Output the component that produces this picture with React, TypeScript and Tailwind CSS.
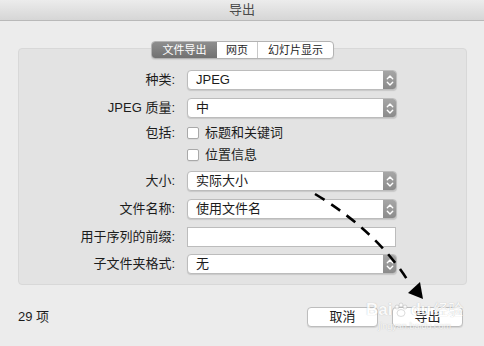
import React from "react";

const font = "font-['Liberation_Sans','Noto_Sans_CJK_SC',sans-serif]";

function Popup({ value }: { value: string }) {
  return (
    <div className="flex h-[20px] w-[210px] overflow-hidden rounded-[4px] border border-[#bcbcbc] bg-white shadow-[0_1px_1px_rgba(0,0,0,0.12)]">
      <div className="flex-1 pl-[8px] text-[13px] leading-[18px] text-[#1c1c1c]">{value}</div>
      <div className="flex w-[13px] items-center justify-center bg-linear-to-b from-[#a6a6a6] to-[#8b8b8b]">
        <svg width="8" height="13" viewBox="0 0 8 13" fill="none" stroke="white" strokeWidth="1.4" strokeLinecap="round" strokeLinejoin="round">
          <path d="M1.3 4.8 4 2.1l2.7 2.7M1.3 8.2 4 10.9l2.7-2.7" />
        </svg>
      </div>
    </div>
  );
}

function Label({ text }: { text: string }) {
  return <div className="text-right text-[13px] leading-[20px] text-[#1c1c1c]">{text}</div>;
}

function Check({ text }: { text: string }) {
  return (
    <div className="flex h-[20px] items-center gap-[6px] text-[13px] text-[#1c1c1c]">
      <span className="h-[12px] w-[12px] rounded-[2px] border border-[#a9a9a9] bg-white shadow-[0_1px_0_rgba(0,0,0,0.05)]" />
      <span className="leading-[20px]">{text}</span>
    </div>
  );
}

export default function App() {
  return (
    <div className={`relative h-[346px] w-[484px] overflow-hidden bg-[#ececec] ${font}`}>
      {/* title bar */}
      <div className="flex h-[21px] items-center justify-center border-b border-[#b9b9b9] bg-linear-to-b from-[#ececec] to-[#d6d6d6] text-[13px] text-[#4a4a4a]">
        导出
      </div>

      {/* tabs */}
      <div className="relative z-10 mt-[20px] flex justify-center">
        <div className="ml-[1px] flex h-[18px] overflow-hidden rounded-[4px] border border-[#b3b3b3] bg-white text-[11px] leading-[16px] shadow-[0_1px_1px_rgba(0,0,0,0.08)]">
          <div className="w-[65px] bg-linear-to-b from-[#8e8e8e] to-[#717171] text-center text-white">文件导出</div>
          <div className="w-[41px] border-r border-[#c8c8c8] text-center text-[#1c1c1c]">网页</div>
          <div className="w-[75px] text-center text-[#1c1c1c]">幻灯片显示</div>
        </div>
      </div>

      {/* panel */}
      <div className="-mt-[11px] ml-[18px] w-[449px] rounded-[4px] border border-[#d8d8d8] bg-[#e3e3e3] pt-[21px] pb-[10px]">
        <div className="grid grid-cols-[156px_210px] gap-x-[12px]">
          <Label text="种类:" />
          <Popup value="JPEG" />

          <div className="col-span-2 h-[8px]" />
          <Label text="JPEG 质量:" />
          <Popup value="中" />

          <div className="col-span-2 h-[5px]" />
          <Label text="包括:" />
          <Check text="标题和关键词" />

          <div className="col-span-2 h-[2px]" />
          <div />
          <Check text="位置信息" />

          <div className="col-span-2 h-[6px]" />
          <Label text="大小:" />
          <Popup value="实际大小" />

          <div className="col-span-2 h-[8px]" />
          <Label text="文件名称:" />
          <Popup value="使用文件名" />

          <div className="col-span-2 h-[8px]" />
          <Label text="用于序列的前缀:" />
          <div className="h-[20px] w-[209px] border border-[#bcbcbc] bg-white" />

          <div className="col-span-2 h-[7px]" />
          <Label text="子文件夹格式:" />
          <Popup value="无" />
        </div>
      </div>

      {/* footer */}
      <div className="mt-[22px] flex items-center pl-[18px] pr-[21px]">
        <div className="flex-1 text-[13px] text-[#1c1c1c]">29 项</div>
        <div className="flex gap-[14px]">
          <button className="h-[20px] w-[71px] rounded-[4px] border border-[#bdbdbd] bg-white text-[13px] leading-[18px] text-[#1c1c1c] shadow-[0_1px_1px_rgba(0,0,0,0.1)]">
            取消
          </button>
          <button className="h-[20px] w-[71px] rounded-[4px] border border-[#bdbdbd] bg-white text-[13px] leading-[18px] text-[#1c1c1c] shadow-[0_1px_1px_rgba(0,0,0,0.1)]">
            导出
          </button>
        </div>
      </div>

      {/* watermark */}
      <div className="pointer-events-none absolute left-[366px] top-[300px] flex flex-col items-center text-white opacity-75 [text-shadow:0_0_1px_#a0a0a0]">
        <div className="flex items-center text-[17px] font-bold leading-[20px]">
          <span>Bai</span>
          <svg width="16" height="16" viewBox="0 0 16 16" className="mx-[1px]">
            <g fill="white" stroke="#b0b0b0" strokeWidth="0.6">
              <circle cx="4" cy="5" r="2" />
              <circle cx="8" cy="3" r="2" />
              <circle cx="12" cy="5" r="2" />
              <ellipse cx="8" cy="11" rx="4" ry="3.5" />
            </g>
          </svg>
          <span>du</span>
          <span className="ml-[2px] text-[15px] font-normal">经验</span>
        </div>
        <div className="text-[9px] leading-[12px]">jingyan.baidu.com</div>
      </div>

      {/* dashed arrow */}
      <svg className="pointer-events-none absolute inset-0" width="484" height="346" viewBox="0 0 484 346">
        <path d="M315 194 Q378 232 410 284" fill="none" stroke="#000" strokeWidth="2.6" strokeDasharray="11 8" />
        <polygon points="408,293 420,282 423,299" fill="#000" />
      </svg>
    </div>
  );
}
